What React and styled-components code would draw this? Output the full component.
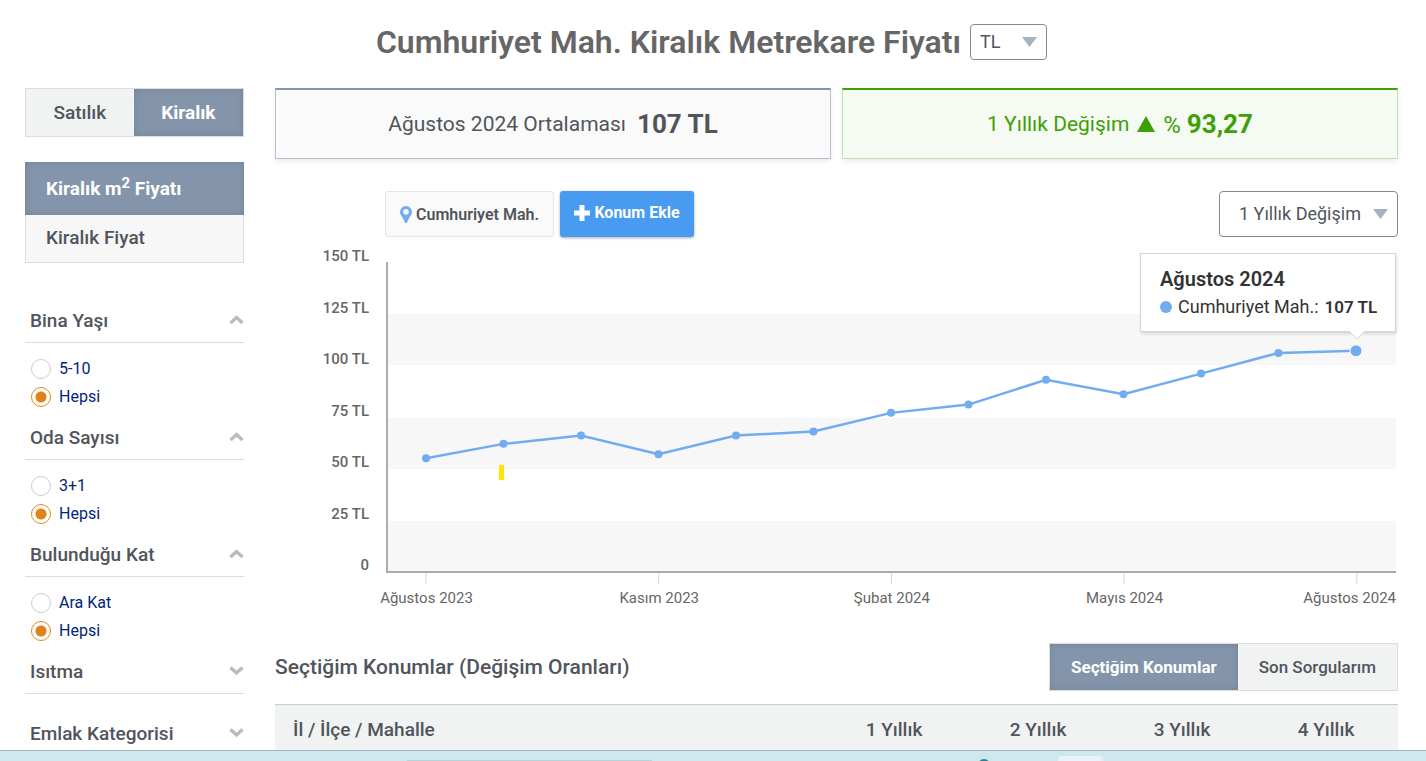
import React, { useState } from "react";
import styled, { createGlobalStyle } from "styled-components";

const filters = [
  { id: "age", title: "Bina Yaşı", options: ["5-10", "Hepsi"] },
  { id: "rooms", title: "Oda Sayısı", options: ["3+1", "Hepsi"] },
  { id: "floor", title: "Bulunduğu Kat", options: ["Ara Kat", "Hepsi"] },
  { id: "heating", title: "Isıtma", options: [] },
  { id: "category", title: "Emlak Kategorisi", options: [] },
];
const prices = [55, 62, 66, 57, 66, 68, 77, 81, 93, 86, 96, 106, 107];
const yLabels = [150, 125, 100, 75, 50, 25, 0];
const xLabels = [
  "Ağustos 2023",
  "Kasım 2023",
  "Şubat 2024",
  "Mayıs 2024",
  "Ağustos 2024",
];
const years = ["1 Yıllık", "2 Yıllık", "3 Yıllık", "4 Yıllık"];

const pointX = (i) => 151 + i * 77.5;
const pointY = (value) => 327 - (value * 310) / 150;

function Chart() {
  const line = prices.map((p, i) => `${pointX(i)},${pointY(p)}`).join(" ");
  return (
    <ChartSvg viewBox="0 0 1123 370" role="img" aria-label="Metrekare fiyatı">
      {[69, 173, 276].map((y) => (
        <rect key={y} x="112" y={y} width="1009" height="51" fill="#f7f7f7" />
      ))}
      {yLabels.map((v, i) => (
        <text
          key={v}
          className="yLabel"
          x="94"
          y={16 + i * 51.5}
          textAnchor="end"
        >
          {v ? `${v} TL` : "0"}
        </text>
      ))}
      {xLabels.map((label, i) => (
        <g key={label}>
          <path d={`M${151 + i * 232.7} 328v11`} stroke="#ccd6eb" />
          <text
            x={i === 4 ? 1121 : 151.5 + i * 232.7}
            y="358"
            textAnchor={i === 4 ? "end" : "middle"}
          >
            {label}
          </text>
        </g>
      ))}
      <path d="M112 17V327H1121" fill="none" stroke="#acacac" strokeWidth="2" />
      <rect x="224" y="220" width="5" height="15" fill="#ffe600" />
      <polyline points={line} fill="none" stroke="#71acf1" strokeWidth="2.5" />
      {prices.map((p, i) => (
        <circle
          key={i}
          cx={pointX(i)}
          cy={pointY(p)}
          r={i === 12 ? 6 : 4}
          fill="#71acf1"
          stroke={i === 12 ? "#fff" : "none"}
        />
      ))}
    </ChartSvg>
  );
}

function Chevron({ open }) {
  return (
    <svg width="15" height="10" viewBox="0 0 15 10" aria-hidden="true">
      <path
        d={open ? "M1.5 8 7.500 2.500 13.500 8" : "M1.5 1.5 7.500 7 13.500 1.5"}
        fill="none"
        stroke="#bbb"
        strokeWidth="3.5"
      />
    </svg>
  );
}

function Triangle() {
  return (
    <svg width="15" height="10" viewBox="0 0 15 10" aria-hidden="true">
      <path d="M0 0H15L7.5 10Z" fill="#a5b2bf" />
    </svg>
  );
}

function Filter({ filter }) {
  const [value, setValue] = useState("Hepsi");
  const open = filter.options.length > 0;
  return (
    <section>
      <FilterHeader type="button" aria-expanded={open}>
        {filter.title}
        <Chevron open={open} />
      </FilterHeader>
      {open ? (
        <FilterBody>
          {filter.options.map((option) => (
            <RadioLabel key={option}>
              <input
                type="radio"
                name={filter.id}
                checked={value === option}
                onChange={() => setValue(option)}
              />
              <span>{option}</span>
            </RadioLabel>
          ))}
        </FilterBody>
      ) : (
        <Spacer />
      )}
    </section>
  );
}

function App() {
  return (
    <Screen>
      <GlobalStyle />
      <Page>
        <TitleRow>
          <h1>Cumhuriyet Mah. Kiralık Metrekare Fiyatı</h1>
          <SelectBox $width={77} $height={36} $pad={9}>
            <select aria-label="Para birimi">
              <option>TL</option>
            </select>
            <Triangle />
          </SelectBox>
        </TitleRow>
        <Columns>
          <Sidebar>
            <Tabs>
              <Tab type="button" $large>
                Satılık
              </Tab>
              <Tab type="button" $large $active>
                Kiralık
              </Tab>
            </Tabs>
            <Menu>
              <MenuLink href="#m2" $active>
                <span>
                  Kiralık m<sup>2</sup> Fiyatı
                </span>
              </MenuLink>
              <MenuLink href="#fiyat">Kiralık Fiyat</MenuLink>
            </Menu>
            {filters.map((filter) => (
              <Filter key={filter.id} filter={filter} />
            ))}
          </Sidebar>
          <Content>
            <Cards>
              <Card>
                Ağustos 2024 Ortalaması <strong>107 TL</strong>
              </Card>
              <Card $green>
                1 Yıllık Değişim
                <svg width="18" height="16" viewBox="0 0 18 16">
                  <path d="M9 0 18 16H0Z" fill="#3e9f07" />
                </svg>
                <Percent>
                  % <strong>93,27</strong>
                </Percent>
              </Card>
            </Cards>
            <Toolbar>
              <LocationButton type="button">
                <svg width="12" height="17" viewBox="0 0 12 17">
                  <path
                    d="M6 0a6 6 0 0 0-6 6c0 3.2 3.7 6.3 4.5 9.8.4 1.6 2.6 1.6 3 0C8.3 12.3 12 9.2 12 6a6 6 0 0 0-6-6Zm0 3a2.8 2.8 0 1 1 0 5.6A2.8 2.8 0 0 1 6 3Z"
                    fill="#71acf1"
                  />
                </svg>
                Cumhuriyet Mah.
              </LocationButton>
              <AddButton type="button">
                <svg width="16" height="16" viewBox="0 0 16 16">
                  <path d="M8 0V16M0 8H16" stroke="#fff" strokeWidth="5" />
                </svg>
                Konum Ekle
              </AddButton>
              <SelectBox $width={179} $height={46} $pad={19} $end>
                <select aria-label="Dönem">
                  <option>1 Yıllık Değişim</option>
                </select>
                <Triangle />
              </SelectBox>
            </Toolbar>
            <ChartArea>
              <Chart />
              <Tooltip role="tooltip">
                <h3>Ağustos 2024</h3>
                <p>
                  <i />
                  Cumhuriyet Mah.: <strong>107 TL</strong>
                </p>
                <svg width="16" height="9" viewBox="0 0 16 9">
                  <path d="M0 0 8 8 16 0" fill="#fff" stroke="#d5d5d5" />
                </svg>
              </Tooltip>
            </ChartArea>
            <SectionHeader>
              <h2>Seçtiğim Konumlar (Değişim Oranları)</h2>
              <Tabs>
                <Tab type="button" $active>
                  Seçtiğim Konumlar
                </Tab>
                <Tab type="button">Son Sorgularım</Tab>
              </Tabs>
            </SectionHeader>
            <Table>
              <thead>
                <tr>
                  <th>İl / İlçe / Mahalle</th>
                  {years.map((year) => (
                    <th key={year}>{year}</th>
                  ))}
                </tr>
              </thead>
            </Table>
          </Content>
        </Columns>
      </Page>
      <Taskbar>
        <SearchEdge />
        <Dot />
        <ActiveApp />
      </Taskbar>
    </Screen>
  );
}

export default App;

const GlobalStyle = createGlobalStyle`
  * {
    box-sizing: border-box;
  }
  body {
    margin: 0;
    background: #fff;
    color: #50555c;
    font-family: Roboto, "Liberation Sans", sans-serif;
  }
  button, select, input {
    font-family: inherit;
    color: inherit;
    margin: 0;
  }
  h1, h2, h3, p {
    margin: 0;
  }
`;
const Screen = styled.div`
  display: grid;
  grid-template-rows: 1fr 11px;
  height: 100vh;
`;
const Page = styled.div`
  min-height: 0;
  overflow: hidden;
  padding: 24px 28px 0 25px;
`;
const TitleRow = styled.header`
  display: flex;
  justify-content: center;
  align-items: center;
  gap: 9px;
  margin-bottom: 28px;
  h1 {
    font-size: 32px;
    line-height: 36px;
    font-weight: 600;
    color: #666;
  }
`;
const SelectBox = styled.div`
  display: grid;
  align-items: center;
  width: ${(p) => p.$width}px;
  height: ${(p) => p.$height}px;
  margin-left: ${(p) => (p.$end ? "auto" : "0")};
  select {
    grid-area: 1 / 1;
    appearance: none;
    width: 100%;
    height: 100%;
    padding: 0 ${(p) => p.$pad}px 2px;
    border: 1px solid #888;
    border-radius: 4px;
    background: #fff;
    font-size: 18px;
  }
  svg {
    grid-area: 1 / 1;
    justify-self: end;
    margin-right: 10px;
    pointer-events: none;
  }
`;
const Columns = styled.div`
  display: flex;
  gap: 31px;
`;
const Sidebar = styled.aside`
  flex: 0 0 219px;
`;
const Tabs = styled.div`
  display: flex;
  border: 1px solid #ddd;
`;
const Tab = styled.button`
  flex: 1 1 auto;
  height: ${(p) => (p.$large ? 47 : 46)}px;
  padding: 0 21px;
  border: 0;
  background: ${(p) => (p.$active ? "#8495ab" : "#f1f3f3")};
  box-shadow: ${(p) => (p.$active ? "inset 0 0 6px #708298" : "none")};
  color: ${(p) => (p.$active ? "#fff" : "#50555c")};
  font-size: ${(p) => (p.$large ? 19 : 17)}px;
  font-weight: ${(p) => (p.$active ? 700 : 500)};
`;
const Menu = styled.nav`
  margin: 25px 0 35px;
`;
const MenuLink = styled.a`
  display: flex;
  align-items: center;
  height: ${(p) => (p.$active ? 53 : 48)}px;
  padding-left: ${(p) => (p.$active ? 21 : 20)}px;
  padding-bottom: ${(p) => (p.$active ? 0 : 3)}px;
  border: ${(p) => (p.$active ? "0" : "1px solid #ddd")};
  border-top: 0;
  background: ${(p) => (p.$active ? "#8495ab" : "#f7f7f7")};
  box-shadow: ${(p) => (p.$active ? "inset 0 0 6px #708298" : "none")};
  color: ${(p) => (p.$active ? "#fff" : "#50555c")};
  font-size: 19px;
  font-weight: ${(p) => (p.$active ? 700 : 500)};
  text-decoration: none;
  sup {
    font-size: 15px;
    line-height: 0;
  }
`;
const FilterHeader = styled.button`
  display: flex;
  justify-content: space-between;
  align-items: center;
  width: 100%;
  height: 45px;
  padding: 0 0 0 5px;
  border: 0;
  border-bottom: 1px solid #ddd;
  background: none;
  font-size: 19px;
  font-weight: 500;
`;
const FilterBody = styled.div`
  padding: 12px 0 4px 6px;
`;
const Spacer = styled.div`
  height: 17px;
`;
const RadioLabel = styled.label`
  display: flex;
  align-items: center;
  gap: 8px;
  height: 28px;
  color: #00257c;
  font-size: 16px;
  span {
    padding-bottom: 2px;
  }
  input {
    appearance: none;
    width: 20px;
    height: 20px;
    border: 1px solid #ccc;
    border-radius: 50%;
    background: #fff;
  }
  input:checked {
    border-color: #e08a1e;
    background: radial-gradient(circle, #df8317 5px, #fff 6px);
  }
`;
const Content = styled.main`
  flex: 1;
  min-width: 0;
`;
const Cards = styled.div`
  display: grid;
  grid-template-columns: 1fr 1fr;
  gap: 11px;
  margin-bottom: 32px;
`;
const Card = styled.div`
  display: flex;
  justify-content: center;
  align-items: center;
  gap: ${(p) => (p.$green ? 8 : 11)}px;
  height: 71px;
  border: 1px solid ${(p) => (p.$green ? "#bfe2b0" : "#b4c0d0")};
  border-top: 2px solid ${(p) => (p.$green ? "#3e9f07" : "#8495ab")};
  background: ${(p) => (p.$green ? "#f5faf3" : "#fafafa")};
  box-shadow: 0 3px 5px #00000012;
  color: ${(p) => (p.$green ? "#3e9f07" : "#50555c")};
  font-size: 21px;
  strong {
    font-size: 26px;
    font-weight: 700;
  }
`;
const Percent = styled.span`
  font-size: 24px;
`;
const Toolbar = styled.div`
  display: flex;
  gap: 6px;
  margin-bottom: 8px;
  padding-left: 110px;
`;
const ToolButton = styled.button`
  display: flex;
  justify-content: center;
  align-items: center;
  gap: 4px;
  height: 46px;
  padding: 0;
  border-radius: 3px;
  font-size: 16px;
`;
const LocationButton = styled(ToolButton)`
  width: 169px;
  border: 1px solid #e6e6e6;
  background: #fafafa;
  font-weight: 600;
`;
const AddButton = styled(ToolButton)`
  width: 134px;
  padding-bottom: 3px;
  border: 0;
  background: #489bf1;
  box-shadow: 0 1px 3px #0005;
  color: #fff;
  font-weight: 700;
`;
const ChartArea = styled.div`
  position: relative;
  margin-bottom: 28px;
`;
const ChartSvg = styled.svg`
  display: block;
  width: 100%;
  height: auto;
  fill: #666;
  font-size: 15px;
  .yLabel {
    font-weight: 500;
  }
`;
const Tooltip = styled.div`
  position: absolute;
  top: 8px;
  right: 2px;
  width: 256px;
  height: 79px;
  padding: 13px 0 0 19px;
  border: 1px solid #d5d5d5;
  background: #fff;
  box-shadow: 1px 2px 3px #0002;
  color: #333;
  h3 {
    font-size: 20px;
    line-height: 24px;
    font-weight: 600;
  }
  p {
    display: flex;
    align-items: center;
    gap: 6px;
    margin-top: 4px;
    font-size: 18px;
    line-height: 24px;
  }
  strong {
    font-size: 17px;
    font-weight: 600;
  }
  i {
    width: 12px;
    height: 12px;
    border-radius: 50%;
    background: #71acf1;
  }
  svg {
    position: absolute;
    top: 77px;
    right: 30px;
  }
`;
const SectionHeader = styled.div`
  display: flex;
  justify-content: space-between;
  align-items: center;
  margin-bottom: 13px;
  h2 {
    font-size: 21px;
    font-weight: 500;
  }
`;
const Table = styled.table`
  width: 100%;
  border-collapse: collapse;
  table-layout: fixed;
  border-top: 1px solid #c6cedb;
  background: #f1f3f3;
  th {
    width: 144px;
    height: 50px;
    padding: 0;
    font-size: 19px;
    font-weight: 500;
  }
  th:first-child {
    width: auto;
    padding-left: 18px;
    text-align: left;
  }
`;
const Taskbar = styled.footer`
  display: grid;
  grid-template-columns: 407fr 245fr 326fr 12fr 68fr 46fr 322fr;
  overflow: hidden;
  border-top: 1px solid #9db5bc;
  background: #cfe8ee;
`;
const SearchEdge = styled.div`
  grid-column: 2;
  margin-top: 9px;
  border-top: 1px solid #b5d5dd;
`;
const Dot = styled.div`
  grid-column: 4;
  height: 12px;
  margin-top: 8px;
  border-radius: 50%;
  background: #258397;
`;
const ActiveApp = styled.div`
  grid-column: 6;
  height: 12px;
  margin-top: 5px;
  border-radius: 4px;
  border-right: 3px solid #dceff3;
  background: #e8f4f7;
`;
